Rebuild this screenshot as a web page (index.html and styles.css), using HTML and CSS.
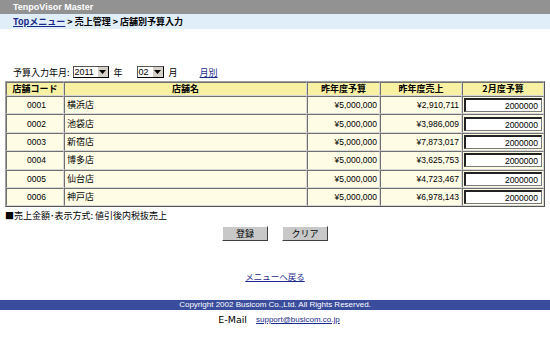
FILE: index.html
```html
<!DOCTYPE html>
<html lang="ja">
<head>
<meta charset="utf-8">
<title>TenpoVisor Master</title>
<link rel="stylesheet" href="styles.css">
</head>
<body>
<div class="titlebar">TenpoVisor Master</div>
<div class="crumbs"><a href="#" class="toplink">Topメニュー</a> &gt; 売上管理 &gt; 店舗別予算入力</div>

<div class="form-row">
  <span class="lbl">予算入力年月:</span>
  <span class="sel sel-year"><span class="val">2011</span><span class="arrow"><svg width="7" height="4" viewBox="0 0 7 4"><path d="M0 0h7L3.5 4z" fill="#000"/></svg></span></span>
  <span class="unit">年</span>
  <span class="sel sel-month"><span class="val">02</span><span class="arrow"><svg width="7" height="4" viewBox="0 0 7 4"><path d="M0 0h7L3.5 4z" fill="#000"/></svg></span></span>
  <span class="unit">月</span>
  <a href="#" class="monthly">月別</a>
</div>

<table class="grid">
  <thead>
    <tr><th class="c-code">店舗コード</th><th class="c-name">店舗名</th><th class="c-prev">昨年度予算</th><th class="c-sale">昨年度売上</th><th class="c-bud">2月度予算</th></tr>
  </thead>
  <tbody>
    <tr><td class="code">0001</td><td>横浜店</td><td class="num">¥5,000,000</td><td class="num">¥2,910,711</td><td class="inp"><span class="box">2000000</span></td></tr>
    <tr><td class="code">0002</td><td>池袋店</td><td class="num">¥5,000,000</td><td class="num">¥3,986,009</td><td class="inp"><span class="box">2000000</span></td></tr>
    <tr><td class="code">0003</td><td>新宿店</td><td class="num">¥5,000,000</td><td class="num">¥7,873,017</td><td class="inp"><span class="box">2000000</span></td></tr>
    <tr><td class="code">0004</td><td>博多店</td><td class="num">¥5,000,000</td><td class="num">¥3,625,753</td><td class="inp"><span class="box">2000000</span></td></tr>
    <tr><td class="code">0005</td><td>仙台店</td><td class="num">¥5,000,000</td><td class="num">¥4,723,467</td><td class="inp"><span class="box">2000000</span></td></tr>
    <tr><td class="code">0006</td><td>神戸店</td><td class="num">¥5,000,000</td><td class="num">¥6,978,143</td><td class="inp"><span class="box">2000000</span></td></tr>
  </tbody>
</table>

<div class="note">■売上金額･表示方式: 値引後内税抜売上</div>

<div class="buttons">
  <span class="btn">登録</span>
  <span class="btn">クリア</span>
</div>

<div class="back"><a href="#">メニューへ戻る</a></div>

<div class="footer">Copyright 2002 Busicom Co.,Ltd. All Rights Reserved.</div>
<div class="mail"><span class="mail-lbl">E-Mail</span><a href="#">support@busicom.co.jp</a></div>
</body>
</html>
```

FILE: styles.css
```css
html, body {
  margin: 0;
  padding: 0;
  background: #fff;
  font-family: "Noto Sans CJK JP", "Noto Sans", sans-serif;
  font-size: 9px;
  color: #000;
  width: 550px;
}

.titlebar {
  height: 14px;
  line-height: 14px;
  background: #929292;
  color: #fff;
  font-weight: bold;
  font-size: 9px;
  padding-left: 13px;
  font-family: "Liberation Sans", "Noto Sans CJK JP", sans-serif;
}

.crumbs {
  height: 15px;
  line-height: 15px;
  background: #e0eefa;
  padding-left: 13px;
  font-weight: bold;
  font-size: 9px;
}

.crumbs a.toplink {
  color: #1a2a8a;
  text-decoration: underline;
}

.form-row {
  display: flex;
  align-items: center;
  height: 14px;
  margin-top: 36px;
  padding-left: 13px;
  font-size: 9px;
}

.lbl { margin-right: 2px; }

.sel {
  display: inline-flex;
  align-items: stretch;
  height: 12px;
  border: 1px solid #000;
  border-top-color: #555;
  border-left-color: #555;
  background: #fff;
  box-sizing: border-box;
  font-family: "Liberation Sans", sans-serif;
  font-size: 9px;
  line-height: 10px;
}

.sel-year { width: 36px; margin-left: 1px; }
.sel-month { width: 27px; margin-left: 14px; }

.sel .val { flex: 1; padding-left: 1px; }

.sel .arrow {
  width: 10px;
  background: #d4d0c8;
  border-left: 1px solid #fff;
  display: flex;
  align-items: center;
  justify-content: center;
}

.unit { margin-left: 5px; }

a.monthly {
  margin-left: 22px;
  color: #1a2a8a;
  text-decoration: underline;
}

.grid {
  margin: 2px 0 0 5px;
  width: 540px;
  border-collapse: separate;
  border-spacing: 0;
  border: 1px solid #a0a0a0;
  border-right-color: #555;
  border-bottom-color: #555;
  font-size: 9px;
}

.grid th, .grid td {
  border: 1px solid #8a8a8a;
  border-top-color: #707070;
  border-left-color: #707070;
  border-right-color: #d8d8d8;
  border-bottom-color: #d8d8d8;
  padding: 0 2px;
}

.grid th {
  background: #f8f1a4;
  height: 12px;
  line-height: 12px;
  font-weight: bold;
  text-align: center;
}

.grid td {
  background: #fffce6;
  height: 16.4px;
  line-height: 16px;
}

.c-code { width: 52px; }
.c-name { width: 237px; }
.c-prev { width: 67px; }
.c-sale { width: 76px; }

.grid td.code {
  padding-left: 20px;
  font-family: "Liberation Sans", sans-serif;
  font-size: 8.5px;
}

.grid td.num {
  text-align: right;
  font-family: "Liberation Sans", sans-serif;
  font-size: 8.5px;
}

.grid td.inp { padding: 0 1px; }

.box {
  display: block;
  height: 14px;
  line-height: 12px;
  box-sizing: border-box;
  border: 1px solid #7a7a7a;
  border-top: 2px solid #222;
  border-left: 2px solid #222;
  background: #fff;
  text-align: right;
  padding-right: 3px;
  font-family: "Liberation Sans", sans-serif;
  font-size: 8.5px;
}

.note {
  margin: 2px 0 0 5px;
  height: 14px;
  line-height: 14px;
}

.buttons {
  display: flex;
  justify-content: center;
  gap: 14px;
  margin-top: 3px;
}

.btn {
  width: 46px;
  height: 15px;
  line-height: 13px;
  box-sizing: border-box;
  text-align: center;
  background: #c8c8c8;
  border: 1px solid #fff;
  border-right-color: #404040;
  border-bottom-color: #404040;
  font-size: 9px;
}

.back {
  text-align: center;
  margin-top: 28px;
  height: 14px;
  line-height: 14px;
  font-size: 8.5px;
}

.back a { color: #1a2a8a; text-decoration: underline; }

.footer {
  margin-top: 17px;
  height: 10px;
  line-height: 10px;
  background: #3a4c9c;
  color: #fff;
  text-align: center;
  font-family: "Liberation Sans", sans-serif;
  font-size: 8px;
}

.mail {
  display: flex;
  justify-content: center;
  align-items: center;
  height: 18px;
  font-size: 10px;
  padding-left: 8px;
}

.mail-lbl {
  font-family: "DejaVu Sans", sans-serif;
  font-size: 9.5px;
  margin-right: 9px;
}

.mail a {
  color: #1a2a8a;
  text-decoration: underline;
  font-family: "Liberation Sans", sans-serif;
  font-size: 8px;
}
```
